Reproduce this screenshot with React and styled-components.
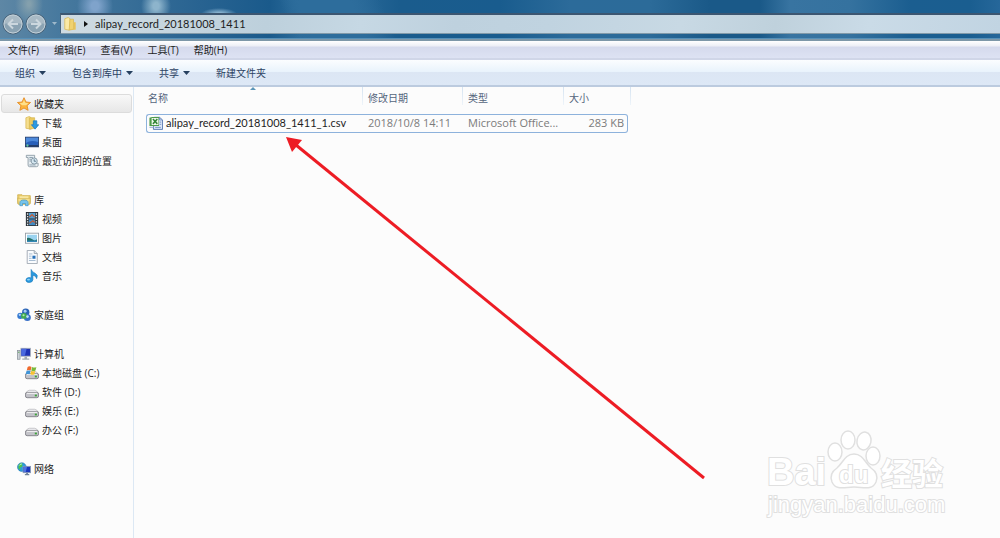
import React from 'react';
import styled, { createGlobalStyle } from 'styled-components';

const GlobalStyle = createGlobalStyle`
  * {
    box-sizing: border-box;
  }
  body {
    margin: 0;
    background: #fcfcfc;
    color: #1e1e1e;
    font: 10px/18px 'Open Sans', 'Noto Sans CJK SC', sans-serif;
  }
  button {
    border: 0;
    padding: 0;
    background: none;
    color: inherit;
    font: inherit;
    white-space: nowrap;
  }
  svg {
    display: block;
    flex: none;
  }
`;

const Window = styled.div`
  display: flex;
  flex-direction: column;
  min-height: 100vh;
  overflow: hidden;
`;

const TitleBar = styled.header`
  display: flex;
  align-items: flex-start;
  height: 41px;
  padding-top: 13px;
  border-bottom: 2px solid #7d97a8;
  box-shadow: inset 0 -1px #5690b8;
  background:
    radial-gradient(ellipse 14px 20px at 29px 4px, #84a0ad 10%, transparent),
    radial-gradient(ellipse 18px 20px at 95px 6px, #7fa3cb 20%, transparent),
    radial-gradient(ellipse 15px 18px at 156px 6px, #8db4cc 20%, transparent),
    radial-gradient(ellipse 18px 6px at 219px 14px, #8db6d2 20%, transparent),
    linear-gradient(68deg, transparent 29%, #2d6d9c 31%, #2d6d9c 36%, transparent 39%),
    linear-gradient(90deg, #5e87a5 0, #47799e 6%, #286391 20%, #1a5a8b 27%,
      #2c6c9b 30%, #2a6998 35%, #1a5c8d 40%, #195c8e 50%, #2c6b9a 57%,
      #2c6b99 65%, #1a5988 71%, #1a5988 76%, #3874a1 79%, #35729f 85%,
      #1b5e90 91%, #1a5e90 97%, #26679a 100%);
`;

const NavButtons = styled.nav`
  display: flex;
  align-items: center;
  gap: 1px;
  flex: none;
  width: 60px;
  height: 22px;
  padding-left: 2px;
`;

const AddressBar = styled.div`
  display: flex;
  align-items: center;
  flex: 1;
  height: 21px;
  padding-left: 2px;
  border: solid #49647c;
  border-width: 2px 0 1px 1px;
  border-top-color: #3c5671;
  border-bottom-color: #8199a8;
  background: linear-gradient(100deg, #cfdbe2, #bdd0dc 22%, #c6d8e4 32%,
    #bed1de 42%, #c0d3e0 52%, #c8d9e4 66%, #bfd1dc 76%, #cadbe7 86%, #c1d4e2);
`;

const Crumb = styled.button`
  display: flex;
  align-items: center;
  gap: 7px;
  font-family: Lato, 'Noto Sans CJK SC', sans-serif;
  font-size: 11px;
`;

const MenuBar = styled.nav`
  display: flex;
  gap: 15px;
  height: 19px;
  padding-left: 8px;
  border-bottom: 2px solid #d0d6e8;
  background: linear-gradient(#fff, #eceef6 30%, #d5daed 35%, #dde2f3);
`;

const ToolBar = styled.div`
  display: flex;
  align-items: center;
  gap: 26px;
  height: 27px;
  padding: 0 15px;
  border-bottom: 2px solid #bccbdf;
  background: linear-gradient(#fbfdff, #e9f3fc 47%, #dce6f4 48%, #dde8f6);
  color: #2b4263;
`;

const ToolButton = styled.button`
  display: flex;
  align-items: center;
  gap: 4px;
`;

const Body = styled.div`
  display: flex;
  flex: 1;
`;

const Sidebar = styled.nav`
  flex: none;
  width: 134px;
  padding: 7px 1px 0;
  border-right: 1px solid #dce8f4;
`;

const Group = styled.ul`
  margin: 0 0 20px;
  padding: 0;
  list-style: none;
`;

const Item = styled.a`
  display: flex;
  align-items: center;
  gap: 3px;
  height: 19px;
  padding-left: ${p => (p.$child ? 23 : 15)}px;
  border: 1px solid ${p => (p.$active ? '#dcdcdc' : 'transparent')};
  border-radius: 3px;
  background: ${p => (p.$active ? 'linear-gradient(#f8f8f8, #e7e7e7)' : 'none')};
  color: inherit;
  text-decoration: none;
  white-space: pre;
`;

const Main = styled.main`
  position: relative;
  flex: 1;
  padding-left: 12px;
`;

const Files = styled.table`
  width: 482px;
  table-layout: fixed;
  border-collapse: separate;
  border-spacing: 0;
`;

const HeadCell = styled.th`
  position: relative;
  width: ${p => p.$width}px;
  height: 27px;
  padding: ${p => (p.$first ? '2px 0 0 2px' : '2px 0 0 5px')};
  color: #55657d;
  font-weight: normal;
  text-align: left;
  vertical-align: top;

  &::after {
    content: '';
    position: absolute;
    top: 0;
    right: ${p => (p.$last ? -3 : 0)}px;
    width: 1px;
    height: 18px;
    background: linear-gradient(#d5e3f1, #eef4fa);
  }
`;

const SortMark = styled.span`
  position: absolute;
  top: 0;
  left: 48%;
  border: 3px solid transparent;
  border-top: 0;
  border-bottom-color: #5b95b8;
`;

const Cell = styled.td`
  height: 19px;
  padding: 0 0 0 5px;
  border: solid #8db2dc;
  border-width: 1px 0;
  color: #7b7b7b;
  font-size: 11px;
  line-height: 16px;
  vertical-align: top;
  white-space: nowrap;

  &:first-child {
    padding-left: 2px;
    border-left-width: 1px;
    border-radius: 3px 0 0 3px;
    color: #1e1e1e;
    font-family: Lato, 'Noto Sans CJK SC', sans-serif;
  }
  &:last-child {
    padding-right: 3px;
    border-right-width: 1px;
    border-radius: 0 3px 3px 0;
    text-align: right;
  }
`;

const FileName = styled.span`
  display: flex;
  align-items: center;
  gap: 3px;
`;

const Pointer = styled.svg`
  position: absolute;
  top: 49px;
  left: 150px;
  pointer-events: none;
`;

const Watermark = styled.svg`
  position: absolute;
  right: 50px;
  bottom: 15px;
  pointer-events: none;
`;

const Icon = ({ children, width = 14 }) => (
  <svg width={width} height="14" viewBox="0 0 16 16" aria-hidden="true">
    {children}
  </svg>
);

const Drive = ({ children }) => (
  <Icon>
    <path d="M.8 9.500Q2.500 6 5 6h6q2.500 0 4.200 3.500z" fill="#efeff2" stroke="#b4b4b9" strokeWidth=".8" />
    <rect x=".5" y="8.500" width="15" height="6" rx="2" fill="#c3c3c9" stroke="#7b7b82" />
    <path d="M2 9.500h12" stroke="#f6f6f6" strokeWidth="1.200" />
    <rect x="11.200" y="11" width="2.400" height="2" fill="#3aa336" />
    {children}
  </Icon>
);

const icons = {
  star: (
    <Icon>
      <path d="M8 .8l2.200 4.900 5.300.6-4 3.600 1.200 5.300L8 12.600l-4.700 2.600 1.200-5.300-4-3.600 5.300-.6z" fill="#fdb53c" stroke="#e58b23" />
      <path d="M8 3l1.400 3.600 3.700.5-2.800 2.300H5.800L3 7.100l3.600-.5z" fill="#ffe08a" />
    </Icon>
  ),
  download: (
    <Icon>
      <path d="M1 2l4-1.500 2 1.500v13l-6-1z" fill="#f6df8f" stroke="#d6b44d" strokeWidth=".8" />
      <path d="M5 2h6v12l-6 1z" fill="#eccb62" stroke="#d6b44d" strokeWidth=".8" />
      <path d="M9.500 5.500h4V10h2.200l-4.200 5-4.200-5h2.200z" fill="#2b9ae4" stroke="#1775bd" strokeWidth=".8" />
    </Icon>
  ),
  desktop: (
    <Icon>
      <rect x=".5" y="2.500" width="15" height="11" fill="#285fb9" stroke="#263f69" />
      <path d="M1 3h14v5Q7 5 1 9z" fill="#4d89da" />
      <path d="M1 12.500h14" stroke="#223354" strokeWidth="1.600" />
      <circle cx="2.800" cy="12" r="1.300" fill="#62c6a0" />
    </Icon>
  ),
  recent: (
    <Icon>
      <path d="M1.500 1.500h9.500v9h4v2.500q0 1.500-2 1.500H5q-1.500 0-1.500-2V4h-2z" fill="#e6edf1" stroke="#8b9aa5" />
      <path d="M5 4h4M5 6h2M5 8h2M5 12.500h7" stroke="#8298a8" />
      <circle cx="10.500" cy="8" r="3.500" fill="#d6e8f2" stroke="#8093a0" />
      <path d="M10.500 6v2.300h2" fill="none" stroke="#547083" />
    </Icon>
  ),
  library: (
    <Icon>
      <path d="M.8 4V2h5l1 1h8.400v9H.8z" fill="#edcf6e" stroke="#c9a73f" strokeWidth=".8" />
      <path d="M3 4h10v4H3z" fill="#fff3b7" />
      <path d="M.8 6h14.400l-.8 7H1.600z" fill="#f6df8b" stroke="#cfb04e" strokeWidth=".8" />
      <path d="M3.300 14.500V11q0-3 4.700-3t4.700 3v3.500h-3V12H6.300v2.500z" fill="#75c4ec" stroke="#3f93c4" strokeWidth=".8" />
    </Icon>
  ),
  video: (
    <Icon>
      <rect x="1.500" y=".5" width="13" height="15" fill="#343b42" stroke="#20282f" />
      <rect x="4.500" y="1" width="7" height="6.400" fill="#4f9fd5" />
      <rect x="4.500" y="8.500" width="7" height="6.500" fill="#3f8ac4" />
      <path d="M5 6l3-3 3 3M5 13l4-3 2 2" fill="none" stroke="#c65d34" strokeWidth="1.400" />
      <path d="M3 1.500v14M13 1.500v14" stroke="#e4eaee" strokeWidth="1.400" strokeDasharray="1.500 1.500" />
    </Icon>
  ),
  picture: (
    <Icon>
      <rect x=".5" y="2.500" width="15" height="11.500" fill="#fff" stroke="#939ca4" />
      <rect x="2.300" y="4.300" width="11.400" height="8" fill="#9bd3f0" />
      <path d="M2.300 8q3-1 6 1.500t5.400 0v2.800H2.300z" fill="#257269" />
      <path d="M2.300 11h11.400v1.300H2.300z" fill="#2c87c5" />
    </Icon>
  ),
  document: (
    <Icon>
      <path d="M2.500.5h8l3.500 3.500v11.500H2.500z" fill="#fafcfe" stroke="#9aa3ae" />
      <path d="M10.500.5V4H14" fill="#dce3ea" stroke="#9aa3ae" />
      <path d="M4.500 4.500h4M4.500 7h3M4.500 9.500h3M4.500 12h7.500" stroke="#9cb4cb" />
      <rect x="8.500" y="6.500" width="3.500" height="3.500" fill="#2971b9" />
    </Icon>
  ),
  music: (
    <Icon>
      <path d="M7 .5q1 3 4.500 4.300 4 2 1.800 6.200-.5-3.300-4.300-4v5.200q-.3 3-4 3.300Q1.200 15.300 1 12.800q.2-2.800 3.600-3.100 1.400 0 2.400.5z" fill="#2999df" stroke="#1977b8" strokeWidth=".7" />
      <ellipse cx="4" cy="12" rx="1.700" ry="1" fill="#8fd2f7" />
    </Icon>
  ),
  homegroup: (
    <Icon>
      <circle cx="3.800" cy="9" r="3.500" fill="#3579d1" />
      <circle cx="10" cy="4.800" r="4.200" fill="#2a63b6" />
      <circle cx="11.800" cy="10.800" r="4" fill="#3b72c8" />
      <circle cx="8" cy="9" r="3.400" fill="#42aa51" />
      <circle cx="9.300" cy="3.600" r="1.700" fill="#a6cdf5" />
      <circle cx="3.200" cy="7.800" r="1.300" fill="#b4d8f8" />
      <circle cx="12" cy="9.800" r="1.500" fill="#c0e2fb" />
      <circle cx="7.500" cy="8.200" r="1.200" fill="#b4e9b0" />
    </Icon>
  ),
  computer: (
    <Icon>
      <rect x=".5" y="4" width="3" height="10" fill="#cdd3d8" stroke="#868e96" strokeWidth=".8" />
      <rect x="4.500" y="1.500" width="11" height="9" fill="#1e32b4" stroke="#a9b1bb" />
      <path d="M5 2h6l-2 8H5z" fill="#4a69e0" />
      <path d="M8.500 11h3v2h2.500v1.500H6V13h2.500z" fill="#a2aab2" />
      <path d="M1.200 6h1.600" stroke="#51a14c" />
    </Icon>
  ),
  system: (
    <Drive>
      <path d="M3 1q2-1.500 4.500 0L6.500 5Q4 4 2 5z" fill="#ef6a2e" />
      <path d="M8.200 1.200q2.500 1.300 4.800 0l-1 4q-2 1.200-4.800 0z" fill="#79b93c" />
      <path d="M1.800 5.500q2.200-1 4.500 0L5.300 9.500Q3 8.500.8 9.500z" fill="#3f94d8" />
      <path d="M7 5.800q2.200 1 4.700 0l-1 4Q8 10.600 6 9.500z" fill="#f7c330" />
    </Drive>
  ),
  drive: <Drive />,
  network: (
    <Icon>
      <circle cx="5.500" cy="5.800" r="5" fill="#2c9bdc" stroke="#2577ae" strokeWidth=".6" />
      <path d="M2 3q2-2 4-1.500L6 5 3.500 6.500 4 9 1.500 7zM7 5l3 1-1 3-2-1z" fill="#4fc54a" />
      <path d="M2.500 4q1-1.600 3-1.800" fill="none" stroke="#d6f4ee" />
      <rect x="7" y="5" width="8.500" height="7.200" fill="#1b36bb" stroke="#8899b6" />
      <path d="M7.500 5.500h4l-1.500 6H7.500z" fill="#4d74e2" />
      <path d="M10.500 12.500h2v1.300h1.500V15h-5v-1.200h1.500z" fill="#6f8299" />
    </Icon>
  ),
};

const FolderIcon = () => (
  <Icon>
    <path d="M2 2l4-1.500L8 2v12l-1 1-5-1z" fill="#fbe9a6" stroke="#d9b650" strokeWidth=".8" />
    <path d="M8 2.500h4V14l-5 1z" fill="#f0d271" stroke="#d9b650" strokeWidth=".8" />
    <path d="M12 6h2.500v8.500H7l5-1z" fill="#e7c259" />
  </Icon>
);

const CsvIcon = () => (
  <Icon>
    <path d="M6 1.500h6l3.500 3v10.800H5z" fill="#dce7f8" stroke="#4e6faa" />
    <path d="M12 1.500v3h3M7 13h6.500M12 7h2M12 9.500h2" fill="none" stroke="#6c8ac0" />
    <path d="M.5 2l3-1h8v10.500H.5z" fill="#4f9b4a" />
    <rect x="3" y="2.300" width="7.800" height="8" fill="#f2f9ee" />
    <path d="M4.500 3.500l5 5.500M9.500 3.500l-5 5.500" stroke="#338537" strokeWidth="1.700" />
    <path d="M.5 13h4.500" stroke="#a9bcd8" strokeWidth="1.500" />
  </Icon>
);

const Triangle = () => (
  <svg width="7" height="4" viewBox="0 0 7 4" aria-hidden="true">
    <path d="M0 0h7L3.500 4z" fill="#26405f" />
  </svg>
);

const RoundArrow = ({ back }) => (
  <svg width="22" height="22" viewBox="0 0 22 22" aria-hidden="true">
    <circle cx="11" cy="11" r="10" fill="#8ba3b3" stroke="#4a647a" />
    <path d="M2 11a9 9 0 0118 0q-9-3-18 0z" fill="#a9bac5" />
    <circle cx="11" cy="11" r="9" fill="none" stroke="#c3d0d8" />
    <path
      d={back ? 'M16 11H7M11 6.500L6.500 11l4.500 4.500' : 'M6 11h9M11 6.500l4.500 4.500-4.500 4.500'}
      fill="none"
      stroke="#ccd7de"
      strokeWidth="2"
    />
  </svg>
);

const groups = [
  [['star', '收藏夹'], ['download', '下载'], ['desktop', '桌面'], ['recent', '最近访问的位置']],
  [['library', '库'], ['video', '视频'], ['picture', '图片'], ['document', '文档'], ['music', '音乐']],
  [['homegroup', '家庭组']],
  [['computer', '计算机'], ['system', '本地磁盘 (C:)'], ['drive', '软件 (D:)'], ['drive', '娱乐 (E:)'], ['drive', '办公 (F:)']],
  [['network', '网络']],
];

const menus = ['文件(F)', '编辑(E)', '查看(V)', '工具(T)', '帮助(H)'];

const tools = [
  { label: '组织', menu: true },
  { label: '包含到库中', menu: true },
  { label: '共享', menu: true },
  { label: '新建文件夹' },
];

const App = () => (
  <Window>
    <GlobalStyle />
    <TitleBar>
      <NavButtons>
        <button aria-label="后退"><RoundArrow back /></button>
        <button aria-label="前进"><RoundArrow /></button>
        <svg width="10" height="4" viewBox="0 0 10 4" aria-hidden="true">
          <path d="M4 0h5L6.500 3z" fill="#9fb9cb" />
        </svg>
      </NavButtons>
      <AddressBar>
        <Crumb>
          <FolderIcon />
          <svg width="4" height="6" viewBox="0 0 4 6" aria-hidden="true">
            <path d="M0 0l4 3-4 3z" fill="#111" />
          </svg>
          alipay_record_20181008_1411
        </Crumb>
      </AddressBar>
    </TitleBar>

    <MenuBar>
      {menus.map(menu => <button key={menu}>{menu}</button>)}
    </MenuBar>

    <ToolBar>
      {tools.map(({ label, menu }) => (
        <ToolButton key={label}>
          {label}
          {menu && <Triangle />}
        </ToolButton>
      ))}
    </ToolBar>

    <Body>
      <Sidebar>
        {groups.map((items, g) => (
          <Group key={items[0][1]}>
            {items.map(([icon, label], i) => (
              <li key={label}>
                <Item href="#" $child={i > 0} $active={g === 0 && i === 0}>
                  {icons[icon]}
                  {label}
                </Item>
              </li>
            ))}
          </Group>
        ))}
      </Sidebar>

      <Main>
        <Files>
          <thead>
            <tr>
              <HeadCell $width={217} $first>名称<SortMark /></HeadCell>
              <HeadCell $width={100}>修改日期</HeadCell>
              <HeadCell $width={101}>类型</HeadCell>
              <HeadCell $width={64} $last>大小</HeadCell>
            </tr>
          </thead>
          <tbody>
            <tr>
              <Cell>
                <FileName><CsvIcon />alipay_record_20181008_1411_1.csv</FileName>
              </Cell>
              <Cell>2018/10/8 14:11</Cell>
              <Cell>Microsoft Office...</Cell>
              <Cell>283 KB</Cell>
            </tr>
          </tbody>
        </Files>

        <Pointer width="424" height="346" viewBox="0 0 424 346" aria-hidden="true">
          <path d="M12 9L420 342" stroke="#ed1c24" strokeWidth="3" />
          <path d="M2 1l16 3-10 12z" fill="#ed1c24" />
        </Pointer>

        <Watermark width="186" height="94" viewBox="0 0 186 94">
          <g fill="#fff" stroke="#e0e0e0" strokeWidth="1.500">
            <ellipse cx="71" cy="23" rx="7" ry="9" />
            <ellipse cx="84" cy="11" rx="7" ry="9" />
            <ellipse cx="100" cy="12" rx="7" ry="9" transform="rotate(12 100 12)" />
            <ellipse cx="109" cy="27" rx="7" ry="9" />
            <path d="M90 25c9 0 11 9 17 14 6 4 7 9 5 14-4 9-13 5-22 5s-18 4-22-5c-2-5-1-10 5-14 6-5 8-14 17-14z" />
          </g>
          <g
            fill="#fff"
            stroke="#e0e0e0"
            strokeWidth="2"
            paintOrder="stroke"
            fontFamily="'Liberation Sans', 'Noto Sans CJK SC', sans-serif"
            fontWeight="bold"
          >
            <text x="3" y="56" fontSize="38">Bai</text>
            <text x="75" y="54" fontSize="24">du</text>
            <text x="117" y="56" fontSize="31">经验</text>
            <text x="4" y="83" fontSize="22" fontWeight="normal">jingyan.baidu.com</text>
          </g>
        </Watermark>
      </Main>
    </Body>
  </Window>
);

export default App;
